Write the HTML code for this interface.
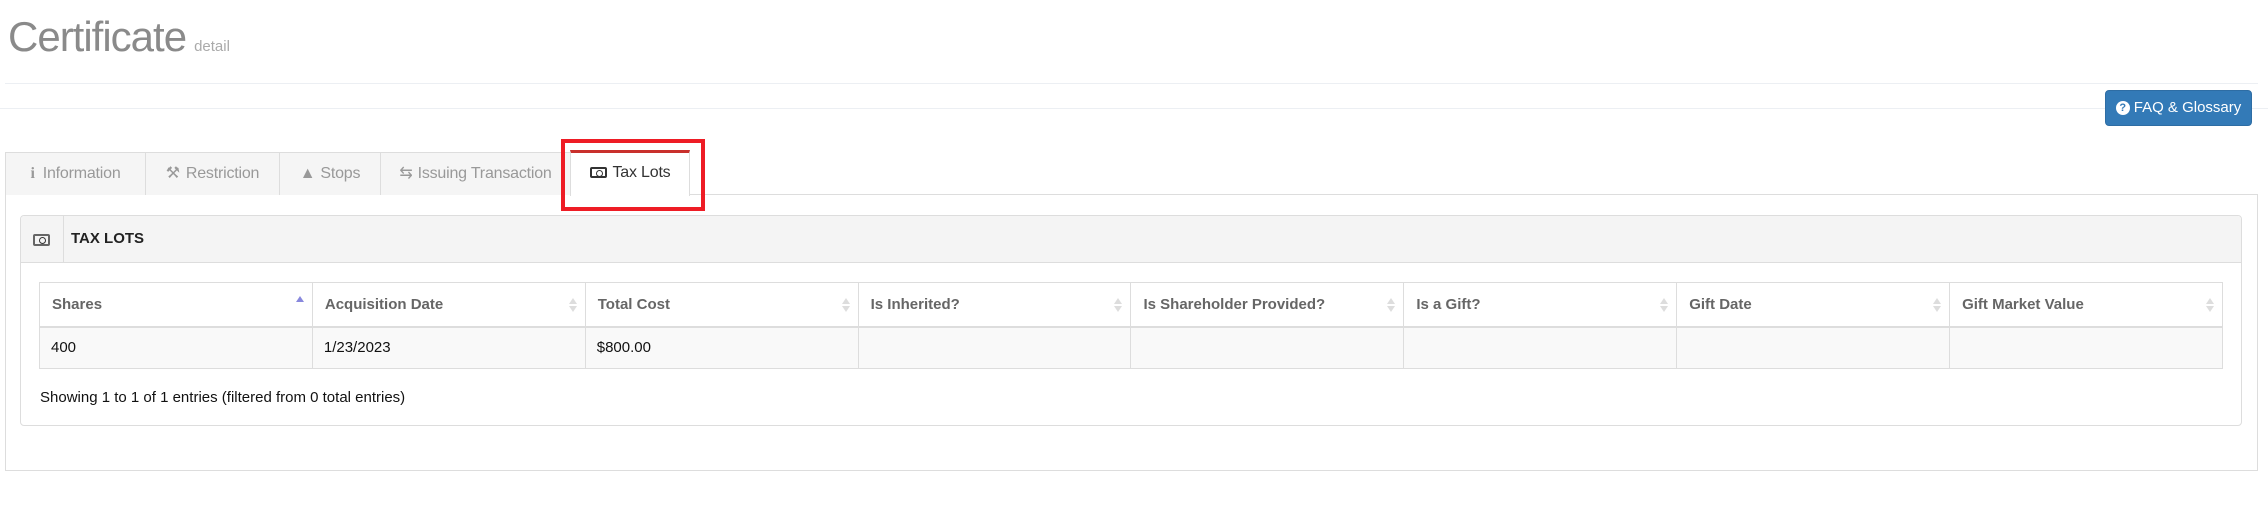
<!DOCTYPE html>
<html><head><meta charset="utf-8"><style>
*{box-sizing:border-box;margin:0;padding:0}
body{width:2268px;height:514px;background:#fff;font-family:"Liberation Sans",Arial,sans-serif;position:relative;overflow:hidden;color:#333}
.abs{position:absolute}
.title{left:8px;top:13px;font-size:42px;color:#8a8a8a;font-weight:normal;letter-spacing:-1px;line-height:48px}
.title small{font-size:15px;color:#aaa;letter-spacing:0;margin-left:8px}
.hr{height:1px;background:#eceff3}
.btn{left:2105px;top:90px;width:147px;height:36px;background:#337ab7;border:1px solid #2e6da4;border-radius:4px;color:#fff;font-size:15px;line-height:34px;text-align:center}
.btn .q{display:inline-block;width:14px;height:14px;border-radius:50%;background:#fff;color:#337ab7;font-size:11px;line-height:14px;font-weight:bold;vertical-align:1px;margin-right:4px}
.tabs{left:5px;top:152px;height:43px;width:2253px;border-bottom:1px solid #ddd}
.tab{position:absolute;top:0;height:43px;background:#f5f5f5;border:1px solid #ddd;border-bottom:none;color:#999;font-size:16px;line-height:41px;text-align:center;letter-spacing:-0.2px}
.tab.act{background:#fff;color:#333;top:-2px;height:46px;border-top:3px solid #c9302c}
.outer{left:5px;top:195px;width:2253px;height:276px;border:1px solid #ddd;border-top:none}
.panel{left:20px;top:215px;width:2222px;height:211px;border:1px solid #ddd;border-radius:4px}
.ph{position:absolute;left:0;top:0;right:0;height:47px;background:#f4f4f4;border-bottom:1px solid #ddd;border-radius:4px 4px 0 0}
.ph .ic{position:absolute;left:0;top:0;width:43px;height:47px;border-right:1px solid #ddd}
.ph .t{position:absolute;left:50px;top:0;line-height:46px;font-weight:bold;font-size:15px;color:#222}
table{position:absolute;left:39px;top:282px;width:2184px;border-collapse:collapse;font-size:15px}
th{height:44px;border:1px solid #ddd;border-bottom:2px solid #ddd;text-align:left;padding-left:12px;color:#666;position:relative;width:273px}
td{height:42px;border:1px solid #ddd;background:#f9f9f9;padding-left:11px;color:#111}
.s{position:absolute;right:8px;top:13px;width:8px;height:18px}
.show{left:40px;top:389px;font-size:15px;color:#111}
.red{left:561px;top:139px;width:144px;height:72px;border:4px solid #ee1c25}
.money{display:inline-block;width:17px;height:11px;border:2px solid #333;border-radius:2px;vertical-align:-1px;margin-right:6px;position:relative}
.money:after{content:"";position:absolute;left:4px;top:1px;width:5px;height:5px;border:1px solid #333;border-radius:50%}
</style></head><body>
<div class="abs title">Certificate<small>detail</small></div>
<div class="abs hr" style="left:5px;top:83px;width:2253px"></div>
<div class="abs hr" style="left:0;top:108px;width:2268px"></div>
<div class="abs btn"><span class="q">?</span>FAQ &amp; Glossary</div>
<div class="abs tabs">
 <div class="tab" style="left:0;width:141px"><b style="font-family:'Liberation Serif',serif;margin-right:8px">i</b>Information</div>
 <div class="tab" style="left:140px;width:135px"><span style="margin-right:6px">&#9874;</span>Restriction</div>
 <div class="tab" style="left:274px;width:102px"><span style="margin-right:5px">&#9650;</span>Stops</div>
 <div class="tab" style="left:375px;width:191px"><span style="margin-right:5px">&#8646;</span>Issuing Transaction</div>
 <div class="tab act" style="left:565px;width:120px;line-height:40px"><span class="money"></span>Tax Lots</div>
</div>
<div class="abs outer"></div>
<div class="abs panel"><div class="ph"><div class="ic"><span class="money" style="position:absolute;left:12px;top:18px;border-color:#666;width:17px;height:12px"></span></div><div class="t">TAX LOTS</div></div></div>
<table><tr>
<th>Shares<svg class="s" viewBox="0 0 8 18"><path d="M0 6L4 0L8 6Z" fill="#8888dd"/></svg></th>
<th>Acquisition Date<svg class="s" viewBox="0 0 8 18"><path d="M0 8L4 2L8 8ZM0 10L4 16L8 10Z" fill="#ddd"/></svg></th>
<th>Total Cost<svg class="s" viewBox="0 0 8 18"><path d="M0 8L4 2L8 8ZM0 10L4 16L8 10Z" fill="#ddd"/></svg></th>
<th>Is Inherited?<svg class="s" viewBox="0 0 8 18"><path d="M0 8L4 2L8 8ZM0 10L4 16L8 10Z" fill="#ddd"/></svg></th>
<th>Is Shareholder Provided?<svg class="s" viewBox="0 0 8 18"><path d="M0 8L4 2L8 8ZM0 10L4 16L8 10Z" fill="#ddd"/></svg></th>
<th>Is a Gift?<svg class="s" viewBox="0 0 8 18"><path d="M0 8L4 2L8 8ZM0 10L4 16L8 10Z" fill="#ddd"/></svg></th>
<th>Gift Date<svg class="s" viewBox="0 0 8 18"><path d="M0 8L4 2L8 8ZM0 10L4 16L8 10Z" fill="#ddd"/></svg></th>
<th>Gift Market Value<svg class="s" viewBox="0 0 8 18"><path d="M0 8L4 2L8 8ZM0 10L4 16L8 10Z" fill="#ddd"/></svg></th>
</tr><tr><td>400</td><td>1/23/2023</td><td>$800.00</td><td></td><td></td><td></td><td></td><td></td></tr></table>
<div class="abs show">Showing 1 to 1 of 1 entries (filtered from 0 total entries)</div>
<div class="abs red"></div>
</body></html>
